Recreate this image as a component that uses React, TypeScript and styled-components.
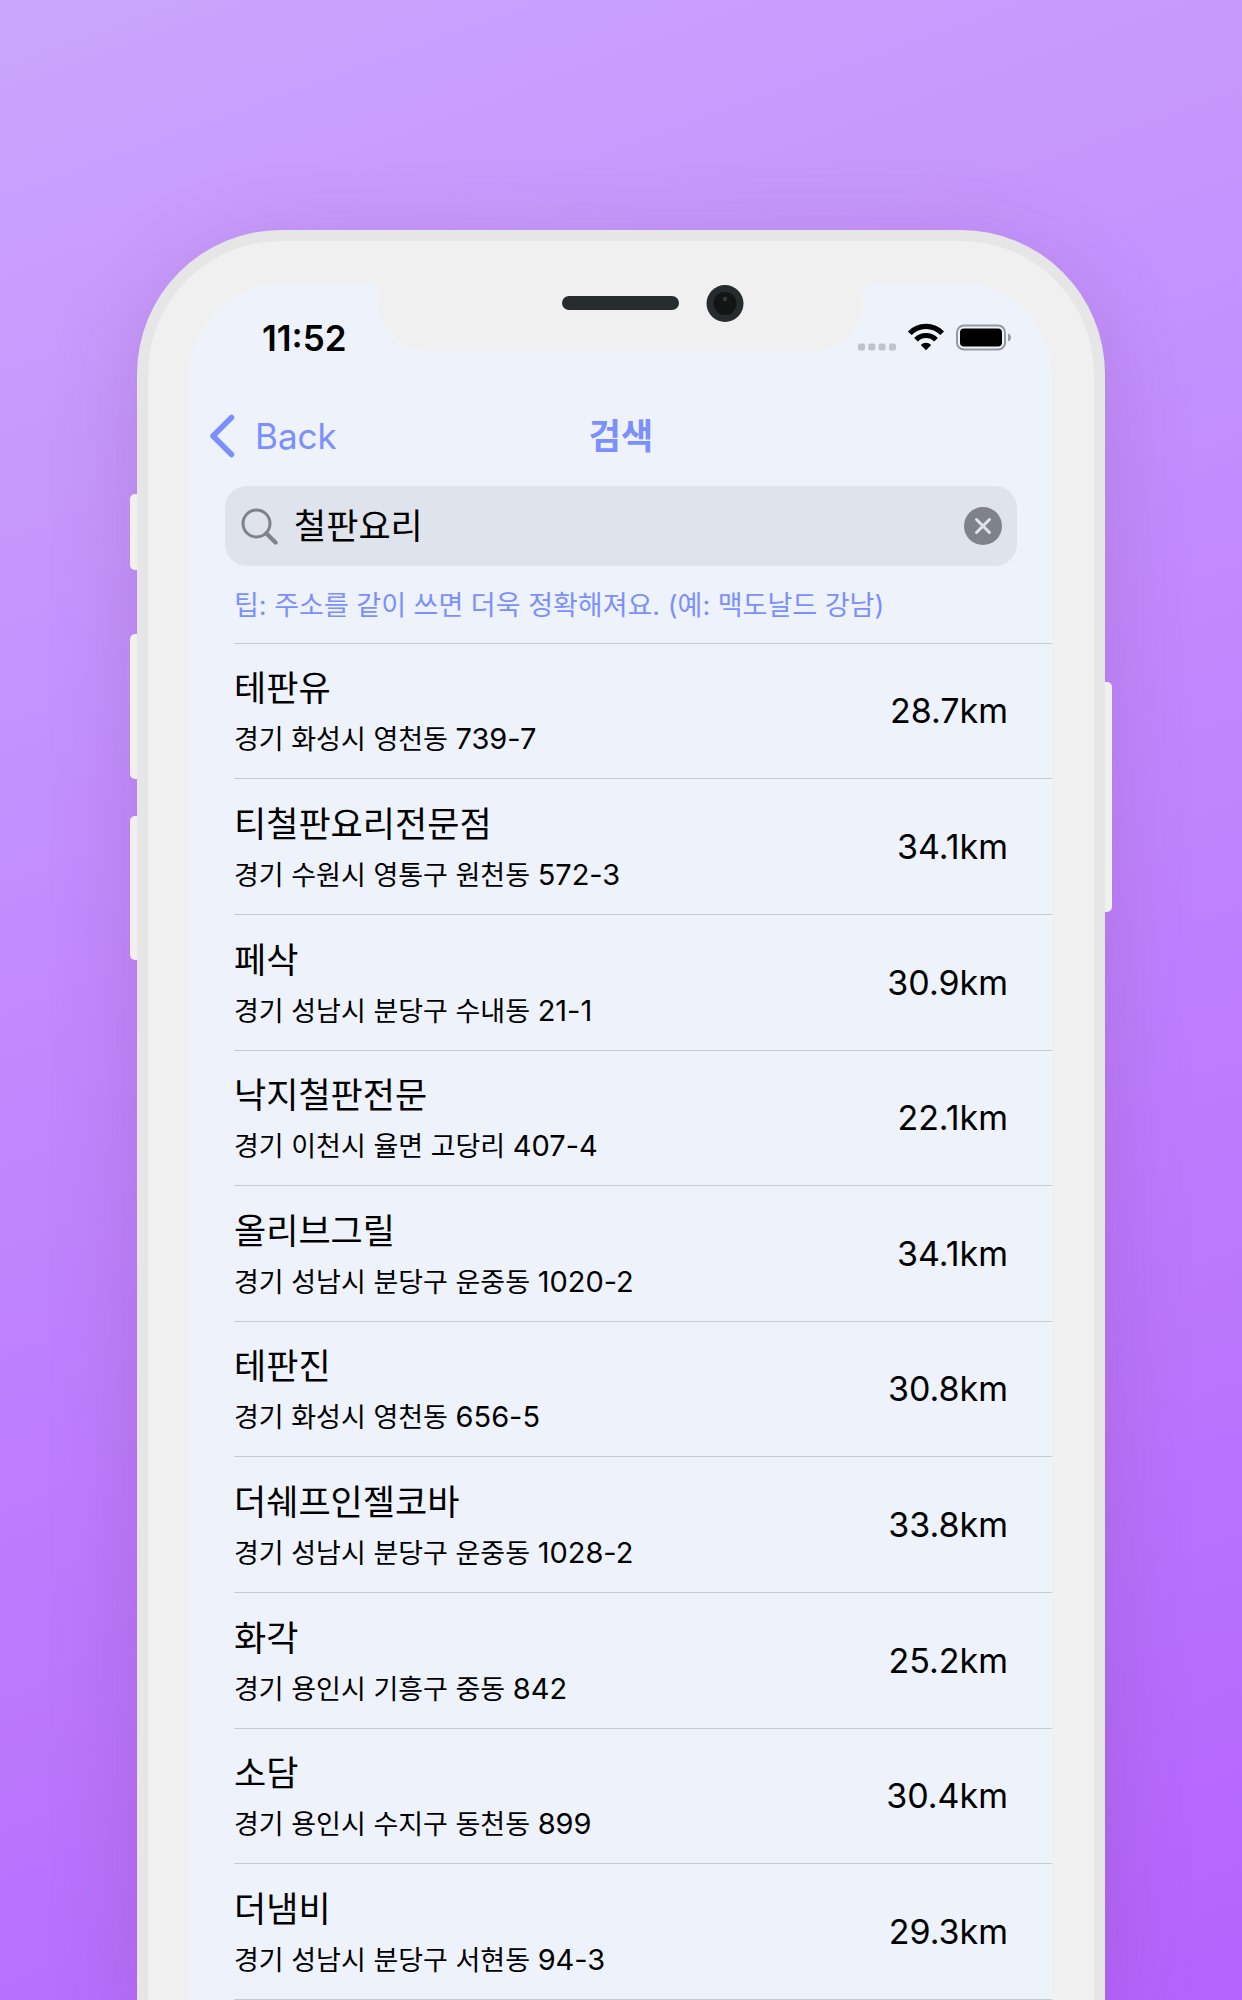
import React, { useState } from "react";
import styled, { createGlobalStyle } from "styled-components";

const accent = "#7b8fff";
const screenColor = "#edf2fb";

const GlobalStyle = createGlobalStyle`
  * { box-sizing: border-box; }
  body {
    margin: 0;
    font-family: "Inter", "Noto Sans CJK KR", sans-serif;
    color: #000;
  }
`;

const Stage = styled.main`
  display: flex;
  flex-direction: column;
  align-items: center;
  min-height: 100vh;
  padding: 230px 60px 0;
  overflow: hidden;
  background: linear-gradient(160deg, #cba5fd 0%, #bf82fe 53%, #b463fc 100%);
`;

const Phone = styled.div`
  position: relative;
  display: flex;
  flex: 1;
  flex-direction: column;
  width: 100%;
  max-width: 968px;
  padding: 42px 42px 0;
  border: 11px solid #e6e6e6;
  border-bottom: 0;
  border-radius: 144px 144px 0 0;
  background: #f0f0f0;
  box-shadow: 0 20px 90px rgba(100, 50, 100, 0.2);
`;

const SideKey = styled.span<{ $side: "left" | "right"; $top: number; $height: number }>`
  position: absolute;
  top: ${(p) => p.$top}px;
  ${(p) => p.$side}: -18px;
  width: 7px;
  height: ${(p) => p.$height}px;
  border-radius: ${(p) => (p.$side === "left" ? "5px 0 0 5px" : "0 5px 5px 0")};
  background: #f0f0f0;
`;

const Screen = styled.div`
  position: relative;
  flex: 1;
  border-radius: 92px 92px 0 0;
  background: ${screenColor};
`;

const Notch = styled.div`
  position: absolute;
  top: 0;
  left: 50%;
  width: 484px;
  height: 68px;
  margin-left: -242px;
  border-radius: 0 0 50px 50px;
  background: #f0f0f0;

  &::before,
  &::after {
    content: "";
    position: absolute;
    top: 0;
    width: 12px;
    height: 12px;
  }
  &::before {
    right: 100%;
    background: radial-gradient(circle at 0 100%, ${screenColor} 11px, #f0f0f0 12px);
  }
  &::after {
    left: 100%;
    background: radial-gradient(circle at 100% 100%, ${screenColor} 11px, #f0f0f0 12px);
  }
`;

const Speaker = styled.span`
  position: absolute;
  top: 13px;
  left: 183px;
  width: 117px;
  height: 14px;
  border-radius: 7px;
  background: #262b2d;
`;

const Camera = styled.svg`
  position: absolute;
  top: 1px;
  left: 327px;
  width: 38px;
  height: 38px;
`;

const StatusBar = styled.div`
  display: flex;
  align-items: center;
  justify-content: space-between;
  height: 110px;
  padding: 0 40px 0 72px;
`;

const Clock = styled.time`
  font-size: 35px;
  font-weight: 600;
  line-height: 40px;
`;

const StatusIcons = styled.svg`
  width: 154px;
  height: 30px;
`;

const NavBar = styled.header`
  display: grid;
  grid-template-columns: 1fr auto 1fr;
  align-items: center;
  height: 86px;
  padding: 0 19px;
  color: ${accent};
`;

const BackButton = styled.button`
  display: flex;
  align-items: center;
  gap: 18px;
  justify-self: start;
  padding: 0;
  border: 0;
  background: none;
  color: inherit;
  font: inherit;
  font-size: 35px;
  line-height: 44px;
`;

const Title = styled.h1`
  margin: 0;
  font-size: 35px;
  font-weight: 600;
  line-height: 44px;
`;

const SearchField = styled.div`
  display: flex;
  align-items: center;
  height: 80px;
  margin: 7px 35px 0;
  padding: 0 15px 0 16px;
  border-radius: 22px;
  background: #dfe3eb;
`;

const SearchLabel = styled.label`
  display: flex;
`;

const SearchInput = styled.input`
  flex: 1;
  min-width: 0;
  padding: 0 15px;
  border: 0;
  outline: 0;
  background: none;
  color: #000;
  font: inherit;
  font-size: 35px;
  line-height: 48px;
`;

const ClearButton = styled.button`
  display: flex;
  padding: 0;
  border: 0;
  background: none;
`;

const Tip = styled.p`
  margin: 0;
  padding: 22px 0 19px 44px;
  color: ${accent};
  font-size: 27px;
  line-height: 36px;
`;

const Results = styled.ul`
  margin: 0 0 0 44px;
  padding: 0;
  border-top: 1px solid #c6cad3;
  list-style: none;
`;

const Result = styled.li`
  display: flex;
  align-items: center;
  justify-content: space-between;
  height: 136px;
  padding-right: 44px;
  border-bottom: 1px solid #c6cad3;

  &:nth-child(5n + 1),
  &:nth-child(5n + 4) {
    height: 135px;
  }
`;

const Place = styled.div`
  display: flex;
  flex-direction: column;
  gap: 9px;
`;

const Name = styled.span`
  font-size: 35px;
  line-height: 48px;
`;

const Address = styled.span`
  font-size: 27px;
  line-height: 36px;
`;

const Lot = styled.span`
  font-size: 29px;
`;

const Distance = styled.span`
  font-size: 34px;
  line-height: 48px;
`;

const places = [
  { name: "테판유", area: "경기 화성시 영천동", lot: "739-7", distance: "28.7km" },
  { name: "티철판요리전문점", area: "경기 수원시 영통구 원천동", lot: "572-3", distance: "34.1km" },
  { name: "페삭", area: "경기 성남시 분당구 수내동", lot: "21-1", distance: "30.9km" },
  { name: "낙지철판전문", area: "경기 이천시 율면 고당리", lot: "407-4", distance: "22.1km" },
  { name: "올리브그릴", area: "경기 성남시 분당구 운중동", lot: "1020-2", distance: "34.1km" },
  { name: "테판진", area: "경기 화성시 영천동", lot: "656-5", distance: "30.8km" },
  { name: "더쉐프인젤코바", area: "경기 성남시 분당구 운중동", lot: "1028-2", distance: "33.8km" },
  { name: "화각", area: "경기 용인시 기흥구 중동", lot: "842", distance: "25.2km" },
  { name: "소담", area: "경기 용인시 수지구 동천동", lot: "899", distance: "30.4km" },
  { name: "더냄비", area: "경기 성남시 분당구 서현동", lot: "94-3", distance: "29.3km" },
];

const sideKeys = [
  { side: "left", top: 253, height: 76 },
  { side: "left", top: 393, height: 145 },
  { side: "left", top: 575, height: 144 },
  { side: "right", top: 441, height: 230 },
] as const;

export default function App() {
  const [query, setQuery] = useState("철판요리");

  return (
    <>
      <GlobalStyle />
      <Stage>
        <Phone>
          {sideKeys.map((key) => (
            <SideKey key={key.side + key.top} $side={key.side} $top={key.top} $height={key.height} />
          ))}
          <Screen>
            <Notch>
              <Speaker />
              <Camera viewBox="0 0 38 38" aria-hidden="true">
                <circle cx="19" cy="19.5" r="18.5" fill="#262b2d" />
                <circle cx="19" cy="19.5" r="11.5" fill="#111516" />
                <circle cx="19" cy="15" r="2.3" fill="#333839" />
              </Camera>
            </Notch>

            <StatusBar>
              <Clock>11:52</Clock>
              <StatusIcons viewBox="0 0 154 30" aria-hidden="true">
                <g fill="#bfc3cb">
                  <rect x="0" y="20.500" width="7" height="7" rx="2" />
                  <rect x="10.300" y="20.500" width="7" height="7" rx="2" />
                  <rect x="20.600" y="20.500" width="7" height="7" rx="2" />
                  <rect x="31" y="20.500" width="7" height="7" rx="2" />
                </g>
                <g fill="none" stroke="#000" strokeWidth="5.2">
                  <path d="M51.800 10.300 A22.600 22.600 0 0 1 84.200 10.300" />
                  <path d="M58 16.700 A14 14 0 0 1 78 16.700" />
                </g>
                <path d="M68 27.300 L62.800 22 A7.400 7.400 0 0 1 73.200 22 Z" fill="#000" />
                <rect x="99" y="2.500" width="48" height="24" rx="7" fill="none" stroke="#9599a2" strokeWidth="2" />
                <rect x="102" y="5.500" width="42" height="18" rx="4" fill="#000" />
                <path d="M150 10.500 C154 11.800 154 17.200 150 18.500 Z" fill="#9599a2" />
              </StatusIcons>
            </StatusBar>

            <NavBar>
              <BackButton type="button">
                <svg width="28" height="44" viewBox="0 0 28 44" aria-hidden="true">
                  <path
                    d="M22.500 3.500 L4 22 L22.500 40.500"
                    fill="none"
                    stroke={accent}
                    strokeWidth="5.6"
                    strokeLinecap="round"
                    strokeLinejoin="round"
                  />
                </svg>
                Back
              </BackButton>
              <Title>검색</Title>
            </NavBar>

            <SearchField>
              <SearchLabel htmlFor="place-search" aria-label="검색">
                <svg width="38" height="38" viewBox="0 0 38 38" aria-hidden="true">
                  <g fill="none" stroke="#7f828a" strokeLinecap="round">
                    <circle cx="15.500" cy="16.500" r="13.500" strokeWidth="3" />
                    <path d="M25.500 26.500 L34.500 35.500" strokeWidth="4.200" />
                  </g>
                </svg>
              </SearchLabel>
              <SearchInput
                id="place-search"
                type="text"
                value={query}
                onChange={(event) => setQuery(event.target.value)}
              />
              <ClearButton type="button" aria-label="Clear" onClick={() => setQuery("")}>
                <svg width="38" height="38" viewBox="0 0 38 38" aria-hidden="true">
                  <circle cx="19" cy="19" r="19" fill="#7f828a" />
                  <path d="M12.500 12.500 L25.500 25.500 M25.500 12.500 L12.500 25.500" stroke="#dfe3eb" strokeWidth="3" strokeLinecap="round" />
                </svg>
              </ClearButton>
            </SearchField>

            <Tip>팁: 주소를 같이 쓰면 더욱 정확해져요. (예: 맥도날드 강남)</Tip>

            <Results>
              {places.map((place) => (
                <Result key={place.name}>
                  <Place>
                    <Name>{place.name}</Name>
                    <Address>
                      {place.area} <Lot>{place.lot}</Lot>
                    </Address>
                  </Place>
                  <Distance>{place.distance}</Distance>
                </Result>
              ))}
            </Results>
          </Screen>
        </Phone>
      </Stage>
    </>
  );
}
